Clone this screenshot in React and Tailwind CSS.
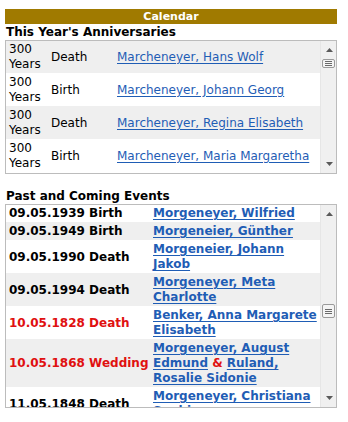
import React from "react";

const LINK = "text-[#1f5db5] underline underline-offset-[2px]";
const RED = "text-[#e01010]";

function Scrollbar({ thumbTop, thumbH }) {
  return (
    <div className="relative w-[16px] shrink-0 bg-[#f0f0f0] border-l border-[#e6e6e6]">
      <svg className="absolute left-[5px] top-[7px]" width="7" height="4" viewBox="0 0 7 4">
        <path d="M0 4 L3.5 0 L7 4 Z" fill="#5a5a5a" />
      </svg>
      <div
        className="absolute left-[1px] w-[13px] rounded-[2px] border border-[#9a9a9a] bg-[#f4f4f4] flex flex-col items-center justify-center gap-[1px]"
        style={{ top: thumbTop, height: thumbH }}
      >
        <div className="w-[7px] h-[1px] bg-[#6a6a6a]" />
        <div className="w-[7px] h-[1px] bg-[#6a6a6a]" />
        <div className="w-[7px] h-[1px] bg-[#6a6a6a]" />
      </div>
      <svg className="absolute left-[5px] bottom-[7px]" width="7" height="4" viewBox="0 0 7 4">
        <path d="M0 0 L3.5 4 L7 0 Z" fill="#5a5a5a" />
      </svg>
    </div>
  );
}

const anniv = [
  ["Death", "Marcheneyer, Hans Wolf"],
  ["Birth", "Marcheneyer, Johann Georg"],
  ["Death", "Marcheneyer, Regina Elisabeth"],
  ["Birth", "Marcheneyer, Maria Margaretha"],
];

const events = [
  { d: "09.05.1939 Birth", n: ["Morgeneyer, Wilfried"] },
  { d: "09.05.1949 Birth", n: ["Morgeneier, Günther"] },
  { d: "09.05.1990 Death", n: ["Morgeneier, Johann Jakob"] },
  { d: "09.05.1994 Death", n: ["Morgeneyer, Meta Charlotte"] },
  { d: "10.05.1828 Death", n: ["Benker, Anna Margarete Elisabeth"], red: true },
  { d: "10.05.1868 Wedding", n: ["Morgeneyer, August Edmund", "Ruland, Rosalie Sidonie"], red: true },
  { d: "11.05.1848 Death", n: ["Morgeneyer, Christiana Sophie"] },
];

export default function App() {
  return (
    <div
      className="bg-white w-[348px] h-[422px] pt-[9px] pl-[5px] text-[12px] text-black"
      style={{ fontFamily: '"DejaVu Sans", Verdana, sans-serif' }}
    >
      <div className="w-[332px]">
        <div className="h-[15px] bg-[#a07a00] text-white font-bold text-[11px] leading-[15px] text-center">
          Calendar
        </div>
        <div className="font-bold leading-[16px] pl-[1px]">This Year's Anniversaries</div>
        <div className="h-[134px] border border-[#bcbcbc] flex">
          <div className="flex-1 overflow-hidden">
            <div className="-mt-[1px]">
              {anniv.map(([t, n], i) => (
                <div
                  key={i}
                  className={`grid grid-cols-[42px_66px_1fr] items-center pl-[3px] pt-[2px] pb-[1px] leading-[15px] ${
                    i % 2 === 0 ? "bg-[#efefef]" : "bg-white"
                  }`}
                >
                  <div>
                    300
                    <br />
                    Years
                  </div>
                  <div>{t}</div>
                  <div>
                    <a className={LINK} href="#">
                      {n}
                    </a>
                  </div>
                </div>
              ))}
            </div>
          </div>
          <Scrollbar thumbTop={18} thumbH={9} />
        </div>

        <div className="font-bold leading-[16px] pl-[1px] mt-[14px]">Past and Coming Events</div>
        <div className="h-[204px] border border-[#bcbcbc] flex">
          <div className="flex-1 overflow-hidden">
            <div className="-mt-[1px] font-bold">
              {events.map((e, i) => (
                <div
                  key={i}
                  className={`grid grid-cols-[144px_1fr] items-center pl-[3px] pt-[2px] pb-[1px] leading-[15px] ${
                    i % 2 === 1 ? "bg-[#efefef]" : "bg-white"
                  }`}
                >
                  <div className={e.red ? RED : ""}>{e.d}</div>
                  <div className="pr-[2px]">
                    <a className={LINK} href="#">
                      {e.n[0]}
                    </a>
                    {e.n[1] && (
                      <>
                        {" "}
                        <span className={RED}>&amp;</span>{" "}
                        <a className={LINK} href="#">
                          {e.n[1]}
                        </a>
                      </>
                    )}
                  </div>
                </div>
              ))}
            </div>
          </div>
          <Scrollbar thumbTop={99} thumbH={14} />
        </div>
      </div>
    </div>
  );
}
